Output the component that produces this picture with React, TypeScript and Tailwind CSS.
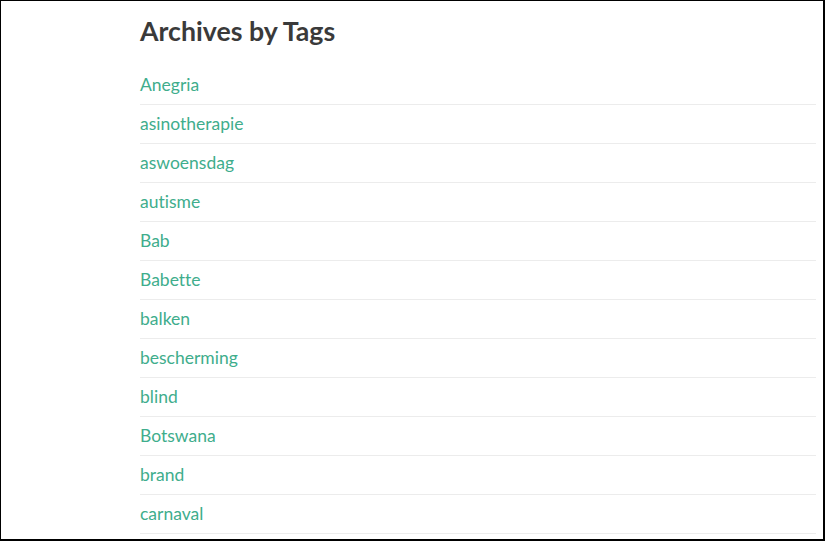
const TAGS = [
  'Anegria',
  'asinotherapie',
  'aswoensdag',
  'autisme',
  'Bab',
  'Babette',
  'balken',
  'bescherming',
  'blind',
  'Botswana',
  'brand',
  'carnaval',
]

export default function App() {
  return (
    <div className="w-[825px] h-[541px] overflow-hidden bg-white border-l border-t border-r-2 border-b-2 border-black font-['Lato','Noto_Sans',sans-serif] [font-variant-ligatures:none]">
      <div className="ml-[139px] mr-[7px]">
        <h1 className="pt-[14px] text-[26.7px] leading-[32px] font-bold text-[#3a3a3a]">Archives by Tags</h1>
        <ul className="mt-[19px]">
          {TAGS.map(tag => (
            <li key={tag} className="border-b border-[#ececec] py-[6px] leading-[26px]">
              <a href="#" className="text-[17.5px] text-[#40ad8c]">{tag}</a>
            </li>
          ))}
        </ul>
      </div>
    </div>
  )
}
